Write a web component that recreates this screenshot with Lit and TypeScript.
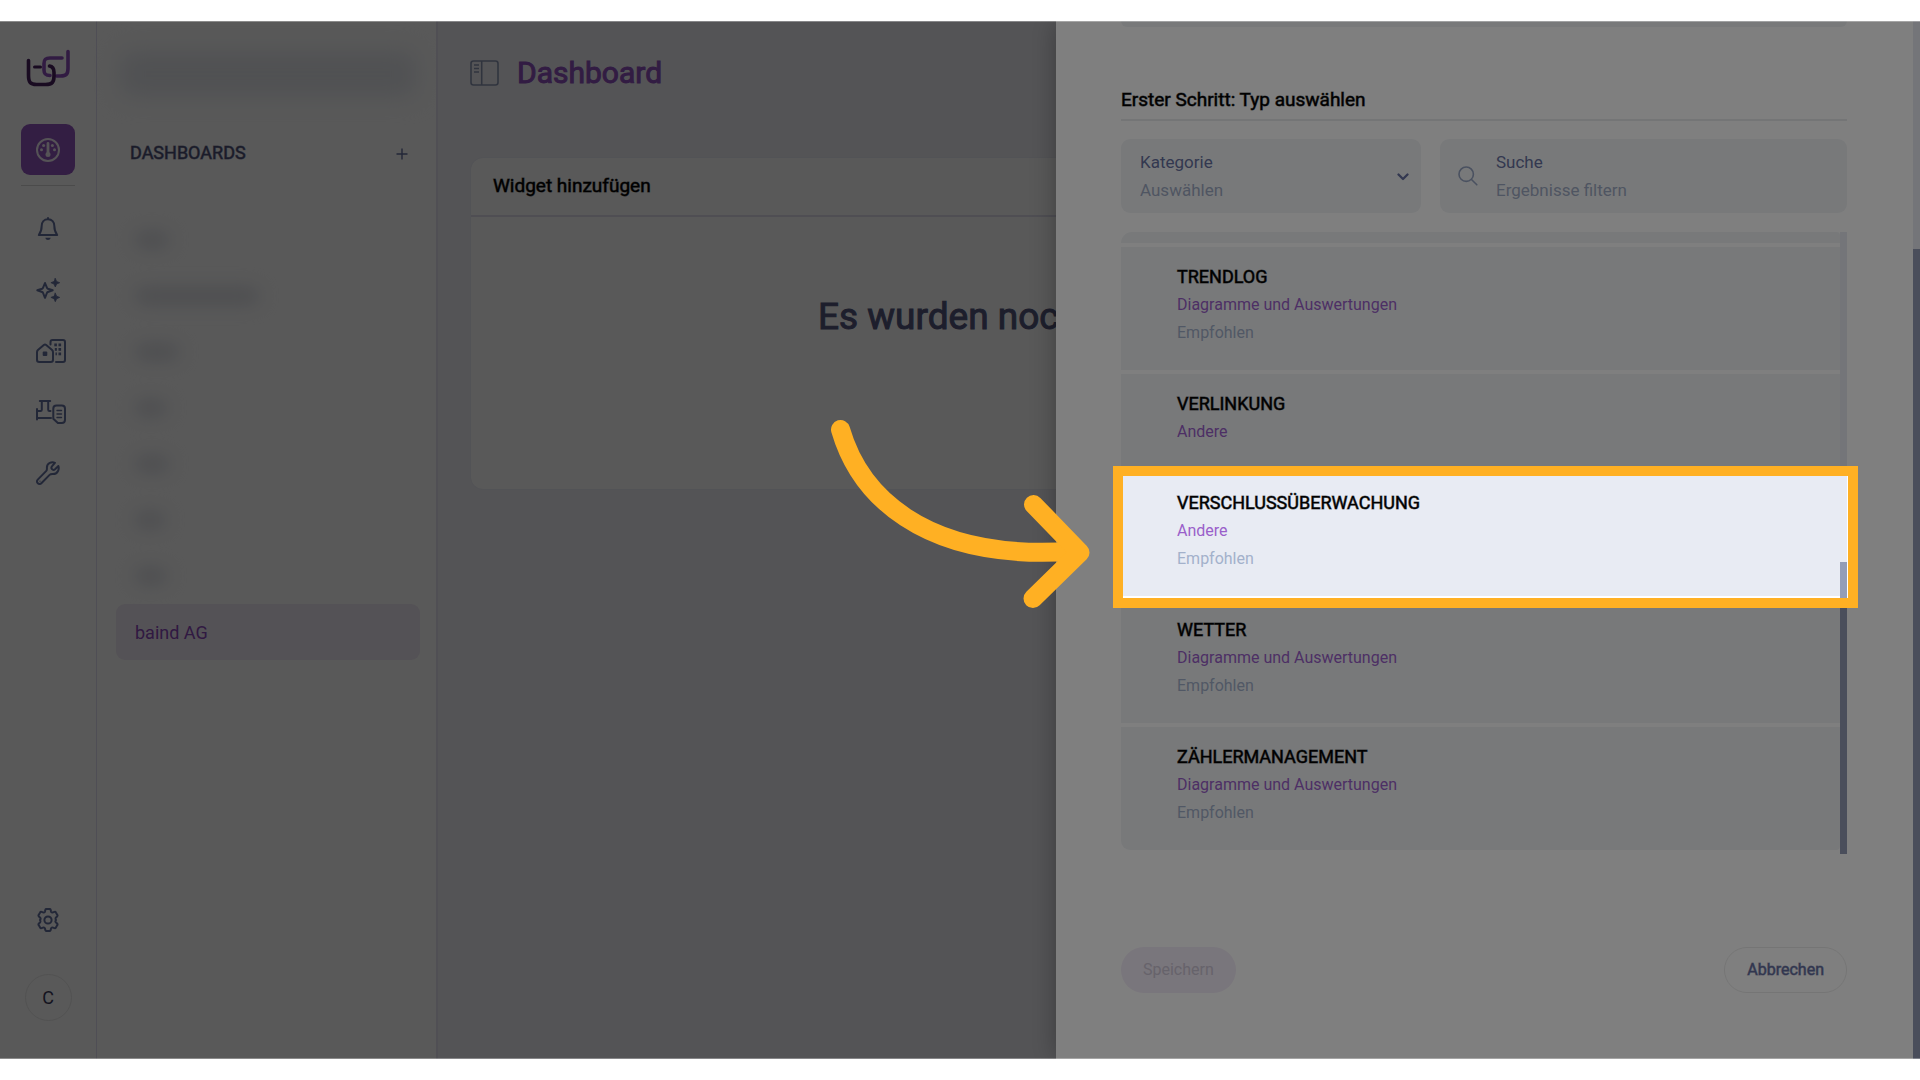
import { LitElement, html, css, svg, nothing } from "lit";
import { customElement } from "lit/decorators.js";

interface WidgetType {
  title: string;
  category: string;
  recommended: boolean;
  spotlight?: boolean;
}

const WIDGET_TYPES: WidgetType[] = [
  { title: "TRENDLOG", category: "Diagramme und Auswertungen", recommended: true },
  { title: "VERLINKUNG", category: "Andere", recommended: false },
  { title: "VERSCHLUSSÜBERWACHUNG", category: "Andere", recommended: true, spotlight: true },
  { title: "WETTER", category: "Diagramme und Auswertungen", recommended: true },
  { title: "ZÄHLERMANAGEMENT", category: "Diagramme und Auswertungen", recommended: true },
];

/* widths of the redacted dashboard names */
const REDACTED = [34, 124, 44, 32, 34, 30, 32];

const icon = (w: number, h: number, body: unknown) =>
  html`<svg width=${w} height=${h} viewBox="0 0 ${w} ${h}" fill="none" stroke="currentColor" stroke-width="2" stroke-linecap="round" stroke-linejoin="round" aria-hidden="true">${body}</svg>`;

const ICONS = {
  gauge: icon(24, 24, svg`
    <circle cx="12" cy="12" r="11"></circle>
    <path d="M12 5.5V15" stroke-width="2.8"></path>
    <circle cx="12" cy="16.500" r="2.500" fill="currentColor" stroke="none"></circle>
    <g fill="currentColor" stroke="none">
      <circle cx="5.500" cy="11.800" r="1.500"></circle><circle cx="7.600" cy="7.400" r="1.500"></circle>
      <circle cx="16.400" cy="7.400" r="1.500"></circle><circle cx="18.500" cy="11.800" r="1.500"></circle>
    </g>`),
  bell: icon(24, 24, svg`
    <path d="M12 2.2c-4 0-6.300 2.900-6.300 6.600 0 4.600-.9 6.600-2.900 9.200h18.400c-2-2.600-2.900-4.600-2.900-9.200 0-3.700-2.300-6.600-6.300-6.600z"></path>
    <path d="M12 2V1"></path>
    <path d="M9.300 20.800h5.400c-.4 1.400-1.400 2.200-2.700 2.200s-2.300-.8-2.700-2.200z" fill="currentColor" stroke="none"></path>`),
  sparkles: icon(24, 24, svg`
    <path d="M9 5l1.900 4.700c.2.500.5.800 1 1L16.700 12.300l-4.800 1.700c-.5.200-.8.500-1 1L9 19.800 7.100 15c-.2-.5-.5-.8-1-1L1.300 12.300l4.800-1.600c.5-.2.8-.5 1-1z"></path>
    <path d="M19.300.5l1.300 3 3.100 1.200-3.100 1.300-1.300 3-1.300-3-3.100-1.300 3.100-1.200zM19.300 15.200l1.300 3 3.100 1.200-3.100 1.300-1.300 3-1.300-3-3.100-1.300 3.100-1.200z" fill="currentColor" stroke-width=".8"></path>`),
  buildings: icon(30, 24, svg`
    <path d="M1 13.200c0-.9.300-1.600.9-2.200L7.800 6c.7-.6 1.700-.6 2.400 0l5.900 5c.6.600.9 1.300.9 2.200v7.600c0 1.300-.9 2.200-2.200 2.200H3.200C1.900 23 1 22.100 1 20.800z"></path>
    <path d="M14.500 5.500V3c0-1.300.8-2 2-2H27c1.300 0 2 .8 2 2v18c0 1.300-.8 2-2 2h-7"></path>
    <rect x="6.700" y="12.500" width="4.600" height="4.600" rx="1" fill="currentColor" stroke="none"></rect>
    <g fill="currentColor" stroke="none">
      <rect x="18.300" y="4.500" width="2.600" height="2.800"></rect><rect x="22.500" y="4.500" width="2.600" height="2.800"></rect>
      <rect x="18.800" y="9" width="2.100" height="2.800"></rect><rect x="22.500" y="9" width="2.600" height="2.800"></rect>
      <rect x="19.500" y="13.500" width="1.400" height="2.800"></rect><rect x="22.500" y="13.500" width="2.600" height="2.800"></rect>
    </g>`),
  valve: icon(30, 24, svg`
    <path d="M1 9v10.500M1 11h3.500c.9 0 1.300-.4 1.300-1.300V1M3.800 1h10.400M12.200 1v8.700c0 .9.400 1.300 1.300 1.300h1M1 18h14"></path>
    <path d="M20.500 5.500h5.300c2 0 3.200 1.200 3.200 3.200v11.100c0 2-1.200 3.200-3.200 3.200h-3.900l-4.600-4.300V8.700c0-2 1.200-3.200 3.200-3.200z"></path>
    <path d="M21 10.500h4.500M21 14h4.500M21 17.500h4.500" stroke-width="1.400"></path>`),
  wrench: icon(24, 24, svg`
    <path d="M18.900 1.800c-3-1.400-8 .3-8 4.700 0 1.700.3 2.500-.6 3.400l-8.300 8.500c-1.200 1.200-1.200 2.800-.2 3.800s2.600 1 3.800-.2l8-8.100c.9-.9 1.700-.8 3.400-.8 4.400 0 6.600-4.600 5.400-8.100l-3.400 3.300c-1 .9-2.200.8-3-.1s-.8-2 .1-3z"></path>
    <circle cx="4" cy="20.200" r=".6" fill="currentColor" stroke="none"></circle>`),
  gear: icon(24, 24, svg`
    <path d="M9.300 1.900c.2-.7.600-1 1.300-1h2.800c.7 0 1.100.3 1.300 1l.3 1.500c.2.800 1.200 1.300 2 1l1.400-.5c.7-.2 1.200 0 1.500.6l1.400 2.400c.4.600.3 1.100-.2 1.600l-1.100 1c-.6.600-.6 1.800 0 2.400l0 .2c-.6.600-.6 1.800 0 2.400l1.100 1c.5.500.6 1 .2 1.600l-1.400 2.400c-.3.600-.8.800-1.500.6l-1.400-.5c-.8-.3-1.800.2-2 1l-.3 1.500c-.2.700-.6 1-1.300 1h-2.800c-.7 0-1.100-.3-1.300-1L9 20.600c-.2-.8-1.200-1.300-2-1l-1.400.5c-.7.200-1.200 0-1.500-.6l-1.400-2.400c-.4-.6-.3-1.100.2-1.600l1.100-1c.6-.6.6-1.800 0-2.400l0-.2c.6-.6.6-1.800 0-2.400l-1.100-1c-.5-.5-.6-1-.2-1.600l1.400-2.400c.3-.6.8-.8 1.500-.6L7 4.400c.8.300 1.800-.2 2-1z"></path>
    <circle cx="12" cy="12" r="3.600"></circle>`),
  panel: html`<svg width="29" height="26" viewBox="0 0 29 26" fill="none" stroke="currentColor" stroke-width="1.600" aria-hidden="true">
    <rect x="1" y="1" width="27" height="24" rx="2.500"></rect>
    <path d="M11.700 1v24M4 5h5M4 8.500h5M4 12h5"></path></svg>`,
  search: html`<svg width="20" height="20" viewBox="0 0 20 20" fill="none" stroke="currentColor" stroke-width="1.600" stroke-linecap="round" aria-hidden="true">
    <circle cx="8.200" cy="8.200" r="7.200"></circle><path d="M13.500 13.500l5.300 5.300"></path></svg>`,
  chevron: html`<svg width="12" height="10" viewBox="0 0 12 10" fill="none" stroke="currentColor" stroke-width="2.300" stroke-linecap="round" stroke-linejoin="round" aria-hidden="true">
    <path d="M1.500 3.500L6 8l4.500-4.500"></path></svg>`,
  plus: html`<svg width="12" height="12" viewBox="0 0 12 12" fill="none" stroke="currentColor" stroke-width="1.400" aria-hidden="true">
    <path d="M6 .5v11M.5 6h11"></path></svg>`,
};

const NAV = [
  { label: "Meldungen", glyph: ICONS.bell },
  { label: "Assistent", glyph: ICONS.sparkles },
  { label: "Gebäude", glyph: ICONS.buildings },
  { label: "Anlagen", glyph: ICONS.valve },
  { label: "Werkzeuge", glyph: ICONS.wrench },
];

const reset = css`
  *, *::before, *::after { box-sizing: border-box; }
  ul { list-style: none; margin: 0; padding: 0; }
  h1, h2, p { margin: 0; font-weight: 400; }
  a { color: inherit; text-decoration: none; }
  button, input, select {
    font: inherit; color: inherit; background: none; border: 0; padding: 0; margin: 0; outline: 0; text-align: left;
  }
  svg { display: block; flex: none; }
  .strong { -webkit-text-stroke: 1px color-mix(in srgb, currentColor 55%, transparent); }
  .heavy { -webkit-text-stroke: 1px currentColor; }
`;

@customElement("icon-rail")
export class IconRail extends LitElement {
  static styles = [reset, css`
    :host {
      display: flex; flex-direction: column; align-items: center; flex: none;
      width: 97px; padding: 26px 0 38px; background: #fff; border-right: 1px solid #e2e0f5; color: #6470a0;
    }
    .logo { margin-bottom: 37px; }
    .tile {
      display: flex; align-items: center; justify-content: center;
      width: 54px; height: 51px; border-radius: 9px; background: #9457c2; color: #f4eef8;
    }
    .rule { width: 54px; height: 1px; margin: 10px 0 13px; background: #d8d8d8; }
    .nav { display: flex; flex-direction: column; gap: 1px; }
    .link { display: flex; align-items: center; width: 60px; height: 60px; padding-left: 18px; }
    .spacer { flex: 1; }
    .avatar {
      display: flex; align-items: center; justify-content: center; width: 47px; height: 47px; margin-top: 42px;
      border: 1px solid #ececec; border-radius: 50%; font-size: 18px; color: #3c3c5c;
    }
  `];

  render() {
    return html`
      <svg class="logo" width="46" height="40" viewBox="0 0 46 40" fill="none" stroke-width="3.600" stroke-linecap="round" aria-hidden="true">
        <g stroke="#8f50bf">
          <path d="M37 11H25c-4.500 0-6 1.500-6 5.500v6.500c0 4 1.500 5.500 6 5.500"></path>
          <path d="M43 4.500V21c0 6-1.500 8-7.500 8h-4"></path>
        </g>
        <g stroke="#4a2160">
          <path d="M3.500 13.500V28c0 7 1.500 9.500 8 9.500h9c7 0 8.500-2.500 8.500-8.500v-3.500c0-4-1-6-4.500-6.500"></path>
          <path d="M9.500 20h6" stroke-width="3"></path>
        </g>
      </svg>
      <a class="tile" href="#" aria-label="Dashboards">${ICONS.gauge}</a>
      <div class="rule"></div>
      <nav class="nav">
        ${NAV.map((n) => html`<a class="link" href="#" aria-label=${n.label}>${n.glyph}</a>`)}
      </nav>
      <div class="spacer"></div>
      <a href="#" aria-label="Einstellungen">${ICONS.gear}</a>
      <button class="avatar">C</button>
    `;
  }
}

@customElement("dashboard-list")
export class DashboardList extends LitElement {
  static styles = [reset, css`
    :host {
      display: flex; flex-direction: column; flex: none; width: 341px; padding: 31px 16px 0 19px;
      background: #fff; border-right: 2px solid #e6e4f2;
    }
    .redacted-search { height: 44px; margin: 0 4px 0 4px; background: #e6e9ef; border-radius: 8px; filter: blur(12px); }
    .head {
      display: flex; align-items: center; justify-content: space-between;
      height: 28px; margin: 43px 12px 45px 14px;
    }
    .head-title { font-size: 18px; line-height: 28px; color: #4c5078; }
    .plus { color: #6470a0; padding: 2px 0 0; }
    .item { display: flex; align-items: center; height: 56px; padding-left: 19px; border-radius: 9px; }
    .blob { height: 16px; background: #dcdee5; border-radius: 8px; filter: blur(9px); }
    .active { background: #f2ebf6; color: #8c48bd; font-size: 18px; }
  `];

  render() {
    return html`
      <div class="redacted-search"></div>
      <div class="head">
        <h2 class="head-title strong">DASHBOARDS</h2>
        <button class="plus" aria-label="Neu">${ICONS.plus}</button>
      </div>
      <ul>
        ${REDACTED.map((w) => html`<li class="item"><div class="blob" style="width:${w}px"></div></li>`)}
        <li><a class="item active" href="#">baind AG</a></li>
      </ul>
    `;
  }
}

@customElement("dashboard-main")
export class DashboardMain extends LitElement {
  static styles = [reset, css`
    :host { display: block; flex: 1; min-width: 0; padding: 32px 33px 0; background: #f3f3f8; }
    .head { display: flex; align-items: center; gap: 18px; height: 40px; margin-left: -1px; }
    .head svg { color: #8a97b4; }
    .title { font-size: 30px; line-height: 40px; color: #9152c0; }
    .card { margin-top: 65px; background: #fff; border-radius: 12px; box-shadow: 0 0 2px #dcdfee; min-height: 331px; }
    .card-head { padding: 14px 22px 15px; border-bottom: 2px solid #e2e1f0; }
    .card-title { font-size: 19px; line-height: 28px; color: #000; }
    .empty { padding: 76px 0 0 347px; font-size: 37px; line-height: 48px; color: #54587f; white-space: nowrap; overflow: hidden; }
  `];

  render() {
    return html`
      <header class="head">${ICONS.panel}<h1 class="title heavy">Dashboard</h1></header>
      <section class="card">
        <div class="card-head"><h2 class="card-title strong">Widget hinzufügen</h2></div>
        <p class="empty heavy">Es wurden noch</p>
      </section>
    `;
  }
}

@customElement("widget-drawer")
export class WidgetDrawer extends LitElement {
  static styles = [reset, css`
    :host {
      display: flex; background: #fff; box-shadow: 0 0 24px rgba(0, 0, 0, 0.3);
    }
    .body { flex: 1; min-width: 0; display: flex; flex-direction: column; padding: 0 66px 65px 65px; }
    .previous { height: 6px; border-radius: 0 0 9px 9px; background: #f1f3f5; }
    .step {
      margin-top: 59px; border-bottom: 2px solid #e9eaec;
      font-size: 19px; line-height: 28px; color: #000; height: 35px;
    }
    .filters { display: grid; grid-template-columns: 300px 1fr; gap: 19px; margin: 18px 0 19px; }
    .field {
      display: flex; align-items: center; height: 74px; padding: 0 18px; background: #f1f3f5; border-radius: 9px;
      color: #6670a0; font-size: 17px; line-height: 28px;
    }
    .field-text { display: flex; flex-direction: column; flex: 1; min-width: 0; }
    .control { appearance: none; width: 100%; height: 29px; color: #9fabc4; }
    .control::placeholder { color: #9fabc4; opacity: 1; }
    .category { padding: 0 12px 0 19px; }
    .search { gap: 18px; }
    .search-icon { color: #94a2c0; }
    .scroller { display: flex; }
    .types { flex: 1; min-width: 0; display: flex; flex-direction: column; gap: 4px; padding-bottom: 4px; background: #fff; }
    .cut { height: 11px; border-radius: 13px 4px 0 0; background: #f1f3f5; }
    .type { position: relative; background: #f1f3f5; }
    .type:last-child { border-radius: 0 0 4px 9px; }
    .current { background: #e8ebf3; }
    .choice { display: block; width: 100%; padding: 16px 56px 23px; line-height: 28px; }
    .name, .cat, .rec { display: block; }
    .name { font-size: 18px; color: #000; }
    .cat { font-size: 16px; color: #9a5fca; }
    .rec { font-size: 16px; color: #a3b1cb; }
    .bar { flex: none; width: 7px; background: #e8ebf3; display: flex; flex-direction: column; justify-content: flex-end; }
    .thumb { background: #949db7; }
    .list-thumb { height: 47%; }
    .page-thumb { height: 78%; }
    .actions { display: flex; justify-content: space-between; margin-top: 93px; }
    .btn { height: 46px; border-radius: 23px; font-size: 16px; line-height: 44px; }
    .save { padding: 0 22px; background: #f3ecf8; color: #cdc6d6; }
    .cancel { padding: 0 22px; border: 1px solid #ebebeb; color: #626c9e; }
    .spot {
      position: absolute; z-index: 5; inset: -7px -18px -12px -8px; border: 10px solid #ffb023;
      box-shadow: 0 0 0 2400px rgba(0, 0, 0, 0.5); pointer-events: none;
    }
    .arrow { position: absolute; z-index: 6; left: -291px; top: -55px; pointer-events: none; }
  `];

  private renderType(t: WidgetType) {
    return html`
      <li class="type ${t.spotlight ? "current" : ""}">
        <button class="choice">
          <span class="name strong">${t.title}</span>
          <span class="cat">${t.category}</span>
          ${t.recommended ? html`<span class="rec">Empfohlen</span>` : nothing}
        </button>
        ${t.spotlight
          ? html`<div class="spot"></div>
              <svg class="arrow" width="262" height="200" viewBox="830 418 262 200" fill="none" stroke="#ffb023" stroke-width="19" stroke-linecap="round" stroke-linejoin="round" aria-hidden="true">
                <path d="M840.500 429.500C858 490 918 563 1076 551"></path>
                <path d="M1033.500 504.500L1080 552.500L1033 598.500"></path>
              </svg>`
          : nothing}
      </li>
    `;
  }

  render() {
    return html`
      <div class="body">
        <div class="previous"></div>
        <h2 class="step strong">Erster Schritt: Typ auswählen</h2>
        <div class="filters">
          <div class="field category">
            <div class="field-text">
              <label for="category">Kategorie</label>
              <select id="category" class="control"><option>Auswählen</option></select>
            </div>
            ${ICONS.chevron}
          </div>
          <div class="field search">
            <span class="search-icon">${ICONS.search}</span>
            <div class="field-text">
              <label for="query">Suche</label>
              <input id="query" class="control" type="text" placeholder="Ergebnisse filtern" />
            </div>
          </div>
        </div>
        <div class="scroller">
          <ul class="types">
            <li class="cut"></li>
            ${WIDGET_TYPES.map((t) => this.renderType(t))}
          </ul>
          <div class="bar"><div class="thumb list-thumb"></div></div>
        </div>
        <div class="actions">
          <button class="btn save" disabled>Speichern</button>
          <button class="btn cancel strong">Abbrechen</button>
        </div>
      </div>
      <div class="bar"><div class="thumb page-thumb"></div></div>
    `;
  }
}

@customElement("app-root")
export class AppRoot extends LitElement {
  static styles = [reset, css`
    :host {
      display: flex; flex-direction: column; min-height: 100vh; padding: 21px 0; box-sizing: border-box;
      background: #fff; font-family: Roboto, "Liberation Sans", sans-serif; font-size: 18px;
    }
    .stage { position: relative; flex: 1; display: flex; overflow: hidden; }
    .stage::after {
      content: ""; position: absolute; inset: 0; z-index: 9; pointer-events: none;
      border: solid rgba(255, 255, 255, 0.3); border-width: 1px 0;
    }
    .backdrop { position: absolute; inset: 0; z-index: 1; background: rgba(0, 0, 0, 0.3); }
    .drawer { position: absolute; inset: 0 0 0 auto; z-index: 2; width: 45%; }
  `];

  render() {
    return html`
      <div class="stage">
        <icon-rail></icon-rail>
        <dashboard-list></dashboard-list>
        <dashboard-main></dashboard-main>
        <div class="backdrop"></div>
        <widget-drawer class="drawer"></widget-drawer>
      </div>
    `;
  }
}
